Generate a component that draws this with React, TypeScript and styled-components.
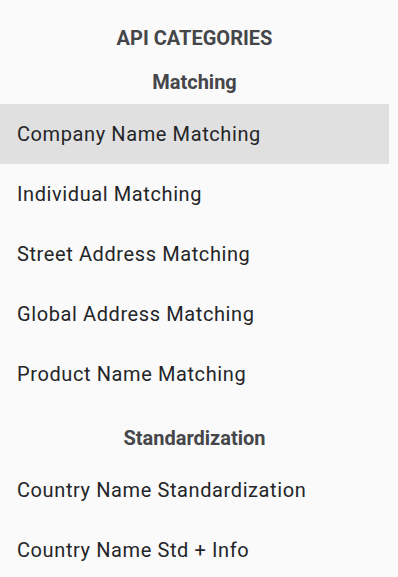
import styled, { createGlobalStyle } from "styled-components"

const GlobalStyle = createGlobalStyle`
  html, body {
    margin: 0;
    padding: 0;
    background: #fafafa;
  }
  body {
    font-family: Roboto, "Liberation Sans", sans-serif;
  }
`

interface Category {
  title: string
  items: string[]
}

const categories: Category[] = [
  {
    title: "Matching",
    items: [
      "Company Name Matching",
      "Individual Matching",
      "Street Address Matching",
      "Global Address Matching",
      "Product Name Matching"
    ]
  },
  {
    title: "Standardization",
    items: [
      "Country Name Standardization",
      "Country Name Std + Info"
    ]
  }
]

const selected = "Company Name Matching"

function App (): JSX.Element {
  return (
    <>
      <GlobalStyle />
      <Sidebar>
        <Title>API CATEGORIES</Title>
        {categories.map(category => (
          <Group key={category.title}>
            <GroupTitle>{category.title}</GroupTitle>
            {category.items.map(item => (
              <Item key={item} $active={item === selected}>{item}</Item>
            ))}
          </Group>
        ))}
      </Sidebar>
    </>
  )
}

const Sidebar = styled.nav`
  width: 389px;
  height: 577px;
  overflow: hidden;
  background: #fafafa;
  display: flex;
  flex-direction: column;
`

const Title = styled.div`
  padding-top: 28px;
  height: 20px;
  line-height: 20px;
  text-align: center;
  font-size: 20px;
  font-weight: 700;
  color: #45464a;
`

const Group = styled.section`
  display: flex;
  flex-direction: column;
`

const GroupTitle = styled.div`
  padding: 24px 0 12px;
  line-height: 20px;
  text-align: center;
  font-size: 20px;
  font-weight: 700;
  color: #45464a;
`

const Item = styled.div<{ $active?: boolean }>`
  height: 60px;
  display: flex;
  align-items: center;
  padding-left: 17px;
  font-size: 20px;
  letter-spacing: 0.03em;
  color: #242528;
  background: ${props => props.$active ? "#e0e0e0" : "transparent"};
`

export default App
